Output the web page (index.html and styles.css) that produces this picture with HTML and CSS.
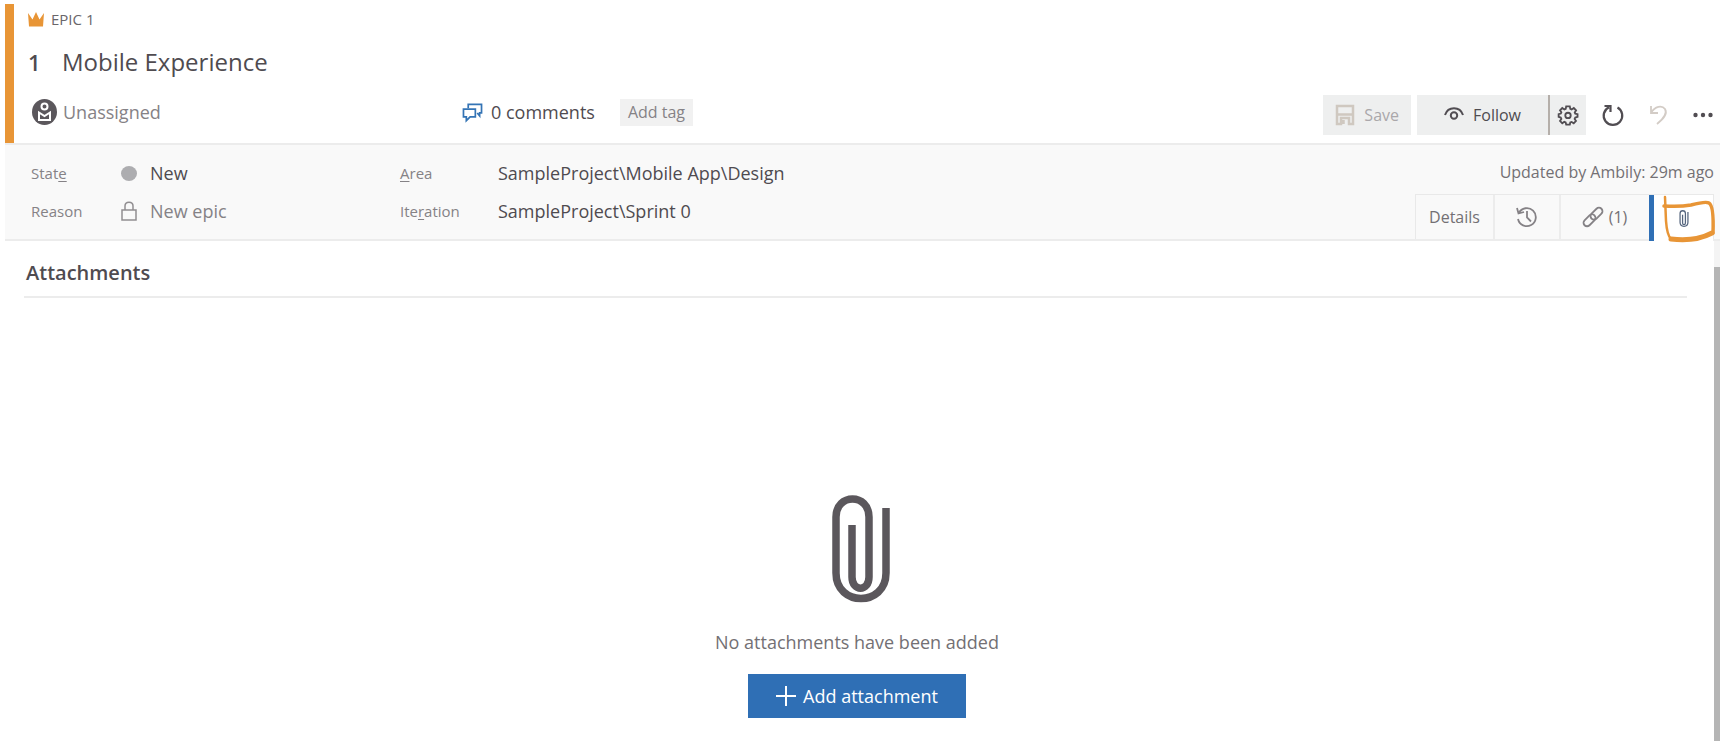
FILE: index.html
```html
<!DOCTYPE html>
<html lang="en">
<head>
<meta charset="utf-8">
<title>Epic 1 - Mobile Experience</title>
<link rel="stylesheet" href="styles.css">
</head>
<body>
<main class="work-item">
  <header class="header">
    <div class="type-row">
      <svg class="crown" viewBox="0 0 16 16" aria-hidden="true"><path d="M0 2 4.500 8.500 8 1 11.500 8.500 16 2 15 15.500H1Z"/></svg>
      <span>EPIC 1</span>
    </div>
    <h1 class="title"><span class="item-id">1</span><span>Mobile Experience</span></h1>
    <div class="meta-row">
      <div class="meta">
        <button class="plain assignee" type="button">
          <svg class="avatar" viewBox="0 0 25 26" aria-hidden="true"><ellipse cx="12.500" cy="13" rx="12.500" ry="13" fill="#5b575c"/><circle cx="12.500" cy="7.500" r="3" fill="none" stroke="#fff" stroke-width="2"/><path d="M7 13.500v7.500h11v-7.500l-5.500 3.500Z" fill="none" stroke="#fff" stroke-width="2"/></svg>
          Unassigned
        </button>
        <button class="plain comments" type="button">
          <svg class="bubbles" viewBox="0 0 22 20" aria-hidden="true"><path d="M6.500 5.500V1.500H20.500V10.500H18.500V13.500L16 10.500"/><path d="M1.500 6.500H14V14.500H8.500L4.500 18.500V14.500H1.500Z"/></svg>
          0 comments
        </button>
        <button class="tag" type="button">Add tag</button>
      </div>
      <div class="toolbar">
        <button class="tool save" type="button" disabled>
          <svg class="i20" viewBox="0 0 20 20" aria-hidden="true"><path d="M2 19V1H18V19H14V13H6V19ZM2 9.500H18M8.500 15V19" fill="none" stroke="#cfc8c0" stroke-width="2.500"/></svg>
          Save
        </button>
        <div class="split">
          <button class="tool follow" type="button">
            <svg class="i20" viewBox="0 0 20 20" aria-hidden="true"><path d="M1 10C4 1 16 1 19 10" fill="none" stroke="#514d52" stroke-width="2"/><circle cx="10" cy="10.500" r="3.200" fill="none" stroke="#514d52" stroke-width="2"/></svg>
            Follow
          </button>
          <button class="tool gear" type="button" aria-label="Follow settings">
            <svg class="i20" viewBox="0 0 22 22" aria-hidden="true"><path d="M9 1.500h4l.5 2.700 1.500.7 2.400-1.600 2.500 2.600-1.500 2.300.6 1.300 2.500.6v3l-2.500.7-.7 1.500 1.500 2.200-2.500 2.600-2.300-1.500-1.500.6-.5 2.300H9l-.6-2.300-1.500-.7-2.200 1.600-2.500-2.600 1.500-2.200-.7-1.500L.7 13v-3l2.400-.6.6-1.400-1.500-2.200L4.700 3.300 7 4.900l1.500-.7Z" fill="none" stroke="#514d52" stroke-width="2"/><circle cx="11" cy="11.500" r="3" fill="none" stroke="#514d52" stroke-width="2"/></svg>
          </button>
        </div>
        <button class="icon-button" type="button" aria-label="Refresh">
          <svg class="i22" viewBox="0 0 22 22" aria-hidden="true"><path d="M15.500 3.500A9.300 9.300 0 1 1 7 3.200M2.500 2H8.500V8" fill="none" stroke="#514d52" stroke-width="2.200"/></svg>
        </button>
        <button class="icon-button undo" type="button" aria-label="Undo" disabled>
          <svg class="i20" viewBox="0 0 20 20" aria-hidden="true"><path d="M2 1V8H9M2 8C6 1 13 0 16 4C19 9 14 14 8 19" fill="none" stroke="#d3ccc6" stroke-width="1.800"/></svg>
        </button>
        <button class="icon-button more" type="button" aria-label="More actions">
          <svg class="i20" viewBox="0 0 20 20" aria-hidden="true"><g fill="#514d52"><circle cx="2.500" cy="10" r="2.200"/><circle cx="10" cy="10" r="2.200"/><circle cx="17.500" cy="10" r="2.200"/></g></svg>
        </button>
      </div>
    </div>
  </header>

  <section class="band">
    <dl class="fields">
      <dt>Stat<u>e</u></dt>
      <dd class="state"><span class="dot"></span>New</dd>
      <dt><u>A</u>rea</dt>
      <dd class="path">SampleProject\Mobile App\Design</dd>
      <dt>Reason</dt>
      <dd class="state reason"><svg class="lock" viewBox="0 0 16 20" aria-hidden="true"><path d="M1 9H15V19H1ZM4 9V5C4 0 12 0 12 5V9" fill="none" stroke="#918e91" stroke-width="1.500"/></svg>New epic</dd>
      <dt>Ite<u>r</u>ation</dt>
      <dd class="path">SampleProject\Sprint 0</dd>
    </dl>
    <div class="side">
      <p class="updated">Updated by Ambily: 29m ago</p>
      <nav class="tabs">
        <button class="tab details" type="button">Details</button>
        <button class="tab history" type="button" aria-label="History">
          <svg class="i22" viewBox="0 0 22 22" aria-hidden="true"><path d="M2.800 7A9 9 0 1 1 2 13M1 2 2.500 7.500 8 6M11 5V11.500L15 15.500" fill="none" stroke="#858286" stroke-width="1.800"/></svg>
        </button>
        <button class="tab links" type="button">
          <svg class="i20" viewBox="0 0 20 20" aria-hidden="true"><g fill="none" stroke="#858286" stroke-width="1.800"><rect x="6.500" y="3.200" width="14" height="7" rx="3.500" transform="rotate(-45 13.500 6.700)"/><rect x="-.5" y="9.800" width="14" height="7" rx="3.500" transform="rotate(-45 6.500 13.300)"/></g></svg>
          (1)
        </button>
        <button class="tab active" type="button" aria-label="Attachments">
          <svg class="small-clip" viewBox="0 0 58 108" aria-hidden="true"><path d="M20 30V82C20 97 38 97 38 82V22C38-1 4-1 4 22V78C4 112 54 112 54 78V13" fill="none" stroke="#55657e" stroke-width="8"/></svg>
          <svg class="marker" viewBox="0 0 58 50" aria-hidden="true"><path d="M5 2 6 26Q7 40 11 44" stroke-width="2.500"/><path d="M4 11Q20 12 31 10 46 6 49 8 54 11 53 38" stroke-width="3.500"/><path d="M11 44Q35 47 52 38" stroke-width="5"/></svg>
        </button>
      </nav>
    </div>
  </section>

  <div class="content">
    <section class="attachments">
      <h2 class="section-title">Attachments</h2>
      <div class="empty">
        <svg class="big-clip" viewBox="0 0 58 108" aria-hidden="true"><path d="M20 30V82C20 97 37 97 37 82V22C37-2 4-2 4 22V78C4 112 54 112 54 78V13" fill="none" stroke="#5b575c" stroke-width="7.500"/></svg>
        <p class="empty-text">No attachments have been added</p>
        <button class="add" type="button">
          <svg class="i20" viewBox="0 0 20 20" aria-hidden="true"><path d="M10 0V20M0 10H20" stroke="#fff" stroke-width="2"/></svg>
          Add attachment
        </button>
      </div>
    </section>
    <div class="scrollbar" aria-hidden="true"><div class="thumb"></div></div>
  </div>
</main>
</body>
</html>
```
FILE: styles.css
```css
* {
  box-sizing: border-box;
}

body {
  margin: 0;
  background: #fff;
  color: #4f4b50;
  font: 16px/24px "Open Sans", "Noto Sans", sans-serif;
}

button {
  display: flex;
  align-items: center;
  margin: 0;
  padding: 0;
  border: 0;
  background: none;
  color: inherit;
  font: inherit;
  white-space: nowrap;
}

svg {
  display: block;
  flex: none;
  overflow: visible;
}

h1, h2, p, dl, dd {
  margin: 0;
}

.i20 {
  width: 20px;
  height: 20px;
}

.i22 {
  width: 22px;
  height: 22px;
}

.work-item {
  display: flex;
  flex-direction: column;
  min-height: 100vh;
  padding: 4px 5px 5px;
}

/* Header */

.header {
  position: relative;
  padding: 0 0 8px 23px;
  border-bottom: 2px solid #ececec;
}

.header::before {
  content: "";
  position: absolute;
  left: 0;
  top: 0;
  bottom: 0;
  width: 9px;
  background: #e89536;
}

.type-row {
  display: flex;
  align-items: center;
  gap: 7px;
  height: 30px;
  font-size: 15px;
  color: #69666a;
}

.crown {
  width: 16px;
  height: 16px;
  fill: #e89536;
}

.title {
  display: flex;
  padding: 12px 0 17px;
  font-size: 24px;
  line-height: 32px;
  font-weight: 400;
}

.item-id {
  width: 34px;
  font-size: 22px;
  font-weight: 600;
}

.meta-row {
  display: flex;
  justify-content: space-between;
  align-items: center;
}

.meta {
  display: flex;
  align-items: center;
  padding: 0 0 6px 4px;
  font-size: 18px;
}

.assignee {
  width: 430px;
  gap: 6px;
  color: #858286;
}

.avatar {
  width: 25px;
  height: 26px;
}

.comments {
  gap: 8px;
}

.bubbles {
  width: 21px;
  height: 19px;
  fill: none;
  stroke: #3474b5;
  stroke-width: 1.8;
}

.tag {
  height: 27px;
  margin-left: 25px;
  padding: 0 8px;
  background: #f1f1f1;
  color: #858286;
  font-size: 16px;
}

.toolbar {
  display: flex;
  align-items: center;
}

.tool {
  height: 40px;
  background: #eeefef;
}

.save {
  gap: 9px;
  margin-right: 6px;
  padding: 0 12px;
  color: #aaa7aa;
}

.split {
  display: flex;
  margin-right: 16px;
}

.follow {
  justify-content: center;
  gap: 9px;
  width: 131px;
}

.gear {
  justify-content: center;
  width: 38px;
  border-left: 2px solid #b5afaa;
}

.icon-button {
  justify-content: center;
  height: 40px;
}

.undo {
  margin-left: 25px;
}

.more {
  margin: 0 7px 0 24px;
}

/* State, area and page tabs */

.band {
  display: flex;
  justify-content: space-between;
  background: #f9f9f9;
  border-bottom: 2px solid #ececec;
}

.fields {
  display: grid;
  grid-template-columns: 90px 279px 98px auto;
  grid-auto-rows: 38px;
  align-items: center;
  padding: 9px 0 9px 26px;
}

.fields dt {
  font-size: 15px;
  color: #858286;
}

.fields u {
  text-underline-offset: 2px;
}

.state {
  display: flex;
  align-items: center;
  gap: 13px;
  font-size: 18px;
}

.reason {
  color: #858286;
}

.dot {
  width: 16px;
  height: 15px;
  border-radius: 50%;
  background: #adadb0;
}

.lock {
  width: 16px;
  height: 20px;
}

.path {
  font-size: 18px;
}

.side {
  display: flex;
  flex-direction: column;
  align-items: flex-end;
  justify-content: space-between;
  padding: 15px 6px 0 0;
}

.updated {
  color: #737074;
}

.tabs {
  display: flex;
  border: 1px solid #e9e9e9;
  border-bottom: 0;
}

.tab {
  justify-content: center;
  height: 44px;
  border-right: 2px solid #ececec;
  color: #737074;
}

.details {
  width: 79px;
}

.history {
  width: 66px;
}

.links {
  gap: 6px;
  width: 88px;
  border-right: 0;
}

.active {
  position: relative;
  height: 46px;
  width: 64px;
  margin-bottom: -2px;
  border-left: 5px solid #2f6fb5;
  border-right: 0;
  background: #fff;
}

.small-clip {
  width: 10px;
  height: 17px;
}

.marker {
  position: absolute;
  left: 6px;
  top: 0;
  width: 58px;
  height: 50px;
  fill: none;
  stroke: #e89536;
  stroke-linecap: round;
}

/* Attachments page */

.content {
  display: flex;
  flex: 1;
}

.attachments {
  display: flex;
  flex: 1;
  flex-direction: column;
  padding: 18px 0 23px;
}

.section-title {
  margin: 0 27px 0 19px;
  padding: 0 2px 9px;
  border-bottom: 2px solid #ececec;
  font-size: 20px;
  line-height: 28px;
  font-weight: 600;
}

.empty {
  display: flex;
  flex: 1;
  flex-direction: column;
  align-items: center;
  justify-content: flex-end;
  padding-right: 5px;
}

.big-clip {
  width: 58px;
  height: 108px;
  margin-left: 8px;
}

.empty-text {
  margin: 27px 0 20px;
  font-size: 18px;
  color: #737074;
}

.add {
  gap: 7px;
  height: 44px;
  padding: 0 28px;
  background: #2f6fb5;
  color: #fff;
  font-size: 18px;
}

.scrollbar {
  display: flex;
  width: 6px;
  padding-top: 26px;
  background: #f4f4f4;
}

.thumb {
  flex: 1;
  background: #b5b5b5;
}
```
